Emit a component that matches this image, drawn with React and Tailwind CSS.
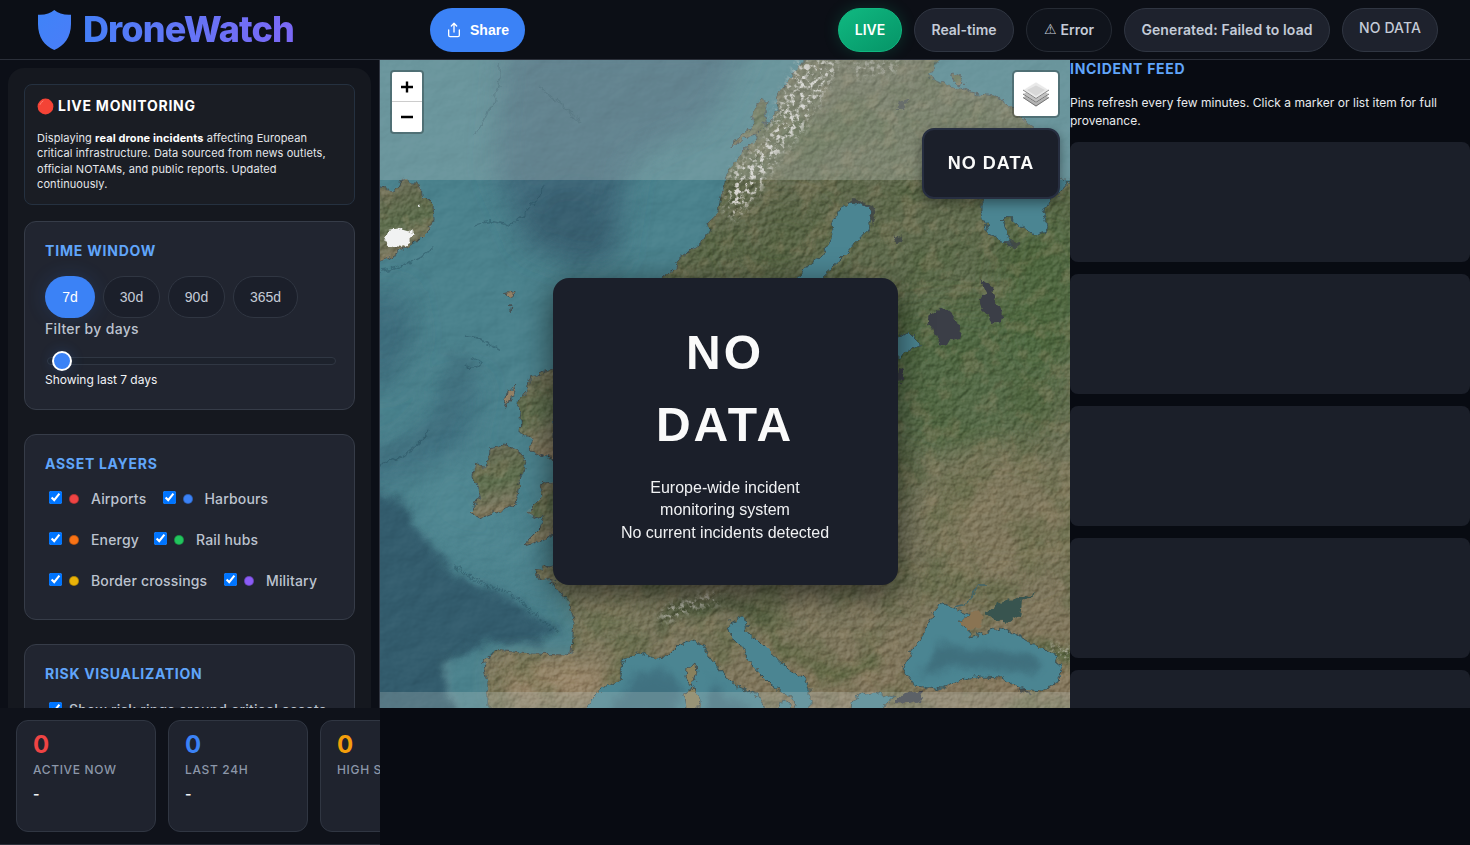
import React from 'react';
import { Share } from 'lucide-react';

const CARD = 'rounded-xl border border-[#363c48] bg-[#212530]';
const HEADING = 'text-[14px] leading-[22px] font-bold uppercase tracking-[0.7px] text-[#60a5fa]';

function Header() {
  return (
    <header className="flex h-[60px] w-full items-start border-b border-[#2b2f39] bg-[#0c0f16] pl-[30px] pr-8">
      <div className="flex w-[400px] shrink-0 items-start pt-[6px]">
        <svg width="48" height="48" viewBox="0 0 48 48" className="shrink-0">
          <defs>
            <linearGradient id="shield" x1="0" y1="0" x2="1" y2="1">
              <stop offset="0" stopColor="#3f83f8" />
              <stop offset="1" stopColor="#4a7df8" />
            </linearGradient>
          </defs>
          <path d="M24.300 4C28 7.500 34 9.200 41 8.800V18C41 31 34 40 24.300 44C14.500 40 8 31 8 18V8.800C15 9.200 20.500 7.500 24.300 4Z" fill="url(#shield)" />
        </svg>
        <span className="ml-[5px] bg-gradient-to-r from-[#447ff7] to-[#7b68f5] bg-clip-text text-[36px] leading-[46px] font-extrabold tracking-[-0.9px] whitespace-nowrap text-transparent">
          DroneWatch
        </span>
      </div>
      <button className="mt-2 flex h-11 w-[95px] shrink-0 items-center justify-center gap-2 rounded-[22px] bg-[#3b82f6] font-['Liberation_Sans',Arial,sans-serif] text-[14px] font-bold text-white">
        <Share size={16} strokeWidth={2} />
        Share
      </button>
      <div className="ml-auto flex gap-3 pt-2 text-[14px] font-semibold whitespace-nowrap text-[#c4cbd7]">
        <span className="flex h-11 w-16 items-center justify-center rounded-[22px] border border-[#10b981] bg-gradient-to-br from-[#10b981] to-[#069467] pb-px text-white shadow-[0_0_16px_rgba(16,185,129,0.2)]">LIVE</span>
        <span className="flex h-11 w-[100px] items-center justify-center rounded-[22px] border border-[#303642] bg-[#1e222d] pb-[2px]">Real-time</span>
        <span className="flex h-11 w-[86px] items-center justify-center gap-1 rounded-[22px] border border-[#262b34] bg-[#10141c] pb-[2px]">
          <span className="font-['DejaVu_Sans',sans-serif] font-bold">⚠</span>Error
        </span>
        <span className="flex h-11 w-[206px] items-center justify-center rounded-[22px] border border-[#303642] bg-[#1e222d] pb-[2px] tracking-[0.1px]">Generated: Failed to load</span>
        <span className="flex h-11 w-24 items-center justify-center rounded-[22px] border border-[#303642] bg-[#1e222d] pb-[6px] font-medium tracking-[0.1px]">NO DATA</span>
      </div>
    </header>
  );
}

function Check({ label, color, className = '' }) {
  return (
    <label className={`flex items-center ${className}`}>
      <input type="checkbox" defaultChecked className="mb-[3px] h-[13px] w-[13px]" />
      <span className="ml-[7px] h-[10px] w-[10px] rounded-full border border-black/25" style={{ backgroundColor: color }} />
      <span className="ml-3">{label}</span>
    </label>
  );
}

function Sidebar() {
  return (
    <aside className="h-[648px] w-[380px] shrink-0 overflow-hidden border-r border-[#303541] bg-[#0c0f17] p-2">
      <div className="flex h-[820px] w-[363px] flex-col rounded-2xl bg-[#15181f] p-4">
        <section className="h-[121px] shrink-0 rounded-lg border border-[#253140] bg-[#1a1d24] px-3 pt-[10px]">
          <h3 className="flex items-center text-[14px] leading-[22px] font-bold tracking-[0.75px] text-white">
            <svg width="17" height="17" viewBox="0 0 17 17" className="mr-1">
              <circle cx="8.500" cy="8.500" r="7.900" fill="#f44336" />
              <path d="M3 6.500A6.500 6.500 0 0 1 6 3" stroke="#ff7e70" strokeWidth="1" strokeLinecap="round" fill="none" />
            </svg>
            LIVE MONITORING
          </h3>
          <p className="mt-[14px] text-[11px] leading-[15.3px] tracking-[0.1px] whitespace-nowrap text-[#e5e7eb]">
            Displaying <b className="text-white">real drone incidents</b> affecting European<br />
            critical infrastructure. Data sourced from news outlets,<br />
            official NOTAMs, and public reports. Updated<br />
            continuously.
          </p>
        </section>

        <section className={`${CARD} mt-4 h-[189px] shrink-0 px-5 pt-[18px]`}>
          <h3 className={`${HEADING} tracking-[0.8px]`}>Time window</h3>
          <div className="mt-[14px] flex gap-2 font-['Liberation_Sans',Arial,sans-serif] text-[14px] text-[#c4cbd7]">
            <button className="h-[42px] w-[50px] rounded-[21px] bg-[#3b82f6] text-white shadow-[0_0_20px_rgba(59,130,246,0.16)]">7d</button>
            <button className="h-[42px] w-[57px] rounded-[21px] border border-[#303642] bg-[#1b1f2a]">30d</button>
            <button className="h-[42px] w-[57px] rounded-[21px] border border-[#303642] bg-[#1b1f2a]">90d</button>
            <button className="h-[42px] w-[65px] rounded-[21px] border border-[#303642] bg-[#1b1f2a]">365d</button>
          </div>
          <div className="text-[14px] leading-[22px] font-medium tracking-[0.3px] text-[#bcc3cf]">Filter by days</div>
          <div className="mt-[11px] ml-[2px] flex h-5 w-[289px] items-center">
            <div className="flex h-2 w-full items-center rounded-full border border-[#303743] bg-[#1d222c] pl-1">
              <div className="h-5 w-5 shrink-0 rounded-full border-2 border-white bg-[#3b82f6] shadow-[0_0_14px_rgba(59,130,246,0.2)]" />
            </div>
          </div>
          <div className="text-[12px] leading-[18px] tracking-[-0.03px] text-[#f1f3f6]">Showing last 7 days</div>
        </section>

        <section className={`${CARD} mt-6 h-[186px] shrink-0 pt-[18px] pl-5`}>
          <h3 className={HEADING}>Asset layers</h3>
          <div className="mt-[13px] flex flex-col gap-[19px] pl-1 text-[14px] leading-[22px] font-medium tracking-[0.16px] whitespace-nowrap text-[#bcc3cf]">
            <div className="flex"><Check className="w-[113px]" label="Airports" color="#ef4444" /><Check className="pl-[0.5px]" label="Harbours" color="#3b82f6" /></div>
            <div className="flex"><Check className="w-[105px]" label="Energy" color="#f97316" /><Check label="Rail hubs" color="#22c55e" /></div>
            <div className="flex"><Check className="w-[175px]" label="Border crossings" color="#eab308" /><Check label="Military" color="#8b5cf6" /></div>
          </div>
        </section>

        <section className={`${CARD} mt-6 h-[150px] shrink-0 pt-[18px] pl-5`}>
          <h3 className={HEADING}>Risk visualization</h3>
          <label className="mt-[14px] flex items-center pl-1 text-[14px] leading-[22px] font-medium tracking-[0.2px] whitespace-nowrap text-[#bcc3cf]">
            <input type="checkbox" defaultChecked className="mb-[3px] h-[13px] w-[13px]" />
            <span className="ml-[7px]">Show risk rings around critical assets</span>
          </label>
        </section>
      </div>
    </aside>
  );
}

function Terrain() {
  return (
    <svg width="690" height="648" viewBox="0 0 690 648" className="block">
      <defs>
        <linearGradient id="land" x1="0.35" y1="0" x2="0.55" y2="1">
          <stop offset="0" stopColor="#6b6c57" />
          <stop offset="0.3" stopColor="#5f694c" />
          <stop offset="0.5" stopColor="#5c6c4c" />
          <stop offset="0.75" stopColor="#72735a" />
          <stop offset="1" stopColor="#84775d" />
        </linearGradient>
        <filter id="soft" x="-30%" y="-30%" width="160%" height="160%"><feGaussianBlur stdDeviation="14" /></filter>
        <filter id="mist" x="-20%" y="-20%" width="140%" height="140%" colorInterpolationFilters="sRGB">
          <feGaussianBlur stdDeviation="4" result="b" />
          <feTurbulence type="fractalNoise" baseFrequency="0.025" numOctaves="4" seed="8" result="n" />
          <feDisplacementMap in="b" in2="n" scale="26" xChannelSelector="R" yChannelSelector="G" />
        </filter>
        <filter id="coast" x="-5%" y="-5%" width="110%" height="110%" colorInterpolationFilters="sRGB">
          <feTurbulence type="fractalNoise" baseFrequency="0.13" numOctaves="3" seed="4" result="n" />
          <feDisplacementMap in="SourceGraphic" in2="n" scale="9" xChannelSelector="R" yChannelSelector="G" />
        </filter>
        <filter id="snow" x="-10%" y="-10%" width="120%" height="120%" colorInterpolationFilters="sRGB">
          <feTurbulence type="fractalNoise" baseFrequency="0.2" numOctaves="5" seed="19" result="n" />
          <feColorMatrix in="n" type="matrix" values="0 0 0 0 0.86  0 0 0 0 0.85  0 0 0 0 0.83  5 0 0 0 -2.45" result="s" />
          <feGaussianBlur in="SourceAlpha" stdDeviation="5" result="a" />
          <feComposite in="s" in2="a" operator="in" />
        </filter>
        <filter id="relief" x="0" y="0" width="100%" height="100%" colorInterpolationFilters="sRGB">
          <feTurbulence type="fractalNoise" baseFrequency="0.16" numOctaves="4" seed="12" result="n" />
          <feDiffuseLighting in="n" surfaceScale="2" diffuseConstant="0.78" lightingColor="#ffffff" result="l">
            <feDistantLight azimuth="225" elevation="42" />
          </feDiffuseLighting>
          <feComposite in="l" in2="SourceAlpha" operator="in" />
        </filter>
        <filter id="swell" x="0" y="0" width="100%" height="100%" colorInterpolationFilters="sRGB">
          <feTurbulence type="fractalNoise" baseFrequency="0.03 0.04" numOctaves="4" seed="5" result="n" />
          <feDiffuseLighting in="n" surfaceScale="2.500" diffuseConstant="0.74" lightingColor="#ffffff">
            <feDistantLight azimuth="225" elevation="42" />
          </feDiffuseLighting>
        </filter>
        <filter id="tint" x="0" y="0" width="100%" height="100%" colorInterpolationFilters="sRGB">
          <feTurbulence type="fractalNoise" baseFrequency="0.022" numOctaves="6" seed="31" result="n" />
          <feColorMatrix in="n" type="matrix" values="0 0 0 0 0.26  0 0 0 0 0.35  0 0 0 0 0.19  0 3.500 0 0 -1.5" result="s" />
          <feComposite in="s" in2="SourceAlpha" operator="in" />
        </filter>
        <filter id="soil" x="0" y="0" width="100%" height="100%" colorInterpolationFilters="sRGB">
          <feTurbulence type="fractalNoise" baseFrequency="0.05" numOctaves="6" seed="77" result="n" />
          <feColorMatrix in="n" type="matrix" values="0 0 0 0 0.61  0 0 0 0 0.54  0 0 0 0 0.42  0 5 0 0 -2.5" result="s" />
          <feComposite in="s" in2="SourceAlpha" operator="in" />
        </filter>
        <clipPath id="view"><rect width="690" height="648" /></clipPath>
        <path id="mainland" d="M283 217L296 209 297 201 308 192 322 182 330 170 328 163 338 152 341 135 345 122 349 108 358 100 367 87 376 78 380 68 391 62 398 50 395 38 403 27 412 18 418 8 428 -5H562L554 8 548 15 556 20 570 27 585 30 600 34 615 36 630 46 645 60 652 68 662 90 660 130 605 139 602 150 608 172 620 180 632 187 628 175 623 160 627 156 640 166 655 174 667 170 663 155 670 142 690 120 700 115V660H108L108 620 103 600 115 590 150 594 188 595 192 592 194 560 190 546 182 534 175 524 157 516 155 510 172 506 200 500V440H230V300H250Z" />
        <g id="isles">
          <path d="M352 88L354 80 366 71 374 66 372 55 380 38 390 42 384 55 386 66 376 76 364 78Z" />
          <path d="M-4 128L13 131 20 126 22 119 31 124 40 124 41 134 53 146 54 160 48 172 38 182 25 188 12 196 -4 204Z" />
          <path d="M147 330L150 317 175 310V400L160 395 150 390 153 380 140 372 142 352 136 343Z" />
          <path d="M172 422L160 424 163 435 146 452 155 458 165 455 160 468 150 478 144 485 155 482 168 477 178 470V422Z" />
          <path d="M110 389L125 385 138 390 146 402 140 418 138 430 136 444 125 448 100 458 90 452 100 438 97 425 92 415 95 405 108 406Z" />
        </g>
      </defs>
      <g clipPath="url(#view)">
        <rect width="690" height="648" fill="#4b828d" />
        <g filter="url(#soft)">
          <path d="M125 -20H370L330 60 250 100 235 200 150 190 115 110Z" fill="#41697a" />
          <path d="M165 130L215 125 240 200 190 205 140 175Z" fill="#395f70" />
          <path d="M-20 235L25 230 35 280 10 330 -20 320Z" fill="#3c6c7c" />
          <path d="M60 325L100 320 85 385 40 410 -20 430V400L30 380 60 350Z" fill="#3f6f80" />
          <path d="M60 400H100L150 500 185 540 120 500 60 490 20 450Z" fill="#528994" opacity=".7" />
        </g>
        <g filter="url(#mist)">
          <path d="M-20 425L30 447 50 490 75 515 115 530 150 550 182 577 155 583 100 580 78 596 70 608 75 670H-20Z" fill="#335c6d" />
          <path d="M65 292L92 290 90 330 70 370 40 390 -10 410V395L35 380 60 345Z" fill="#41717f" opacity=".7" />
          <path d="M62 600L78 605 72 625 82 648H68Z" fill="#5f8d98" opacity=".6" />
        </g>
        <g fill="none" stroke="#28505f" strokeWidth="1.500" opacity=".45" filter="url(#coast)">
          <path d="M95 165Q112 158 128 166Q150 154 165 125" />
          <path d="M120 5Q122 32 106 55L96 75M160 27Q180 42 200 62M0 210Q35 207 54 186M85 276Q105 280 120 290M90 300Q98 293 100 305Q90 312 84 304" />
          <path d="M75 507L88 515 104 525 122 530 140 540 155 555 170 567 180 573" strokeWidth="4" strokeDasharray="1.500 2" />
          <path d="M0 405Q35 395 50 370" />
        </g>
        <rect width="690" height="648" opacity=".28" className="mix-blend-soft-light" filter="url(#swell)" />
        <g filter="url(#coast)" fill="url(#land)" stroke="#454f51" strokeWidth="1">
          <use href="#mainland" />
          <use href="#isles" />
          <path d="M124 350L128 333 136 324 133 334Z M124 234L136 231 132 238Z M131 243L130 253Z" fill="#938065" />
          <path d="M570 19L572 13 580 17 584 24 580 27Z" />
        </g>
        <g filter="url(#soft)">
          <path d="M120 605H240L215 640H125Z" fill="#a98f70" opacity=".75" />
          <ellipse cx="570" cy="320" rx="110" ry="75" fill="#48663c" opacity=".5" />
          <ellipse cx="625" cy="455" rx="85" ry="65" fill="#857c5d" opacity=".6" />
          <ellipse cx="665" cy="230" rx="45" ry="80" fill="#48683c" opacity=".55" />
          <ellipse cx="400" cy="180" rx="50" ry="40" fill="#586445" opacity=".6" />
          <ellipse cx="235" cy="545" rx="45" ry="28" fill="#8a8664" opacity=".35" />
        </g>
        <g opacity=".3"><use href="#mainland" filter="url(#tint)" /></g>
        <g opacity=".24"><use href="#mainland" filter="url(#soil)" /><use href="#isles" filter="url(#soil)" /></g>
        <path d="M275 560L290 545 325 533 350 530 390 545 385 560 345 550 310 553 285 580Z" fill="#3f5031" opacity=".5" filter="url(#mist)" />
        <path d="M375 565L405 585 430 600 460 605 505 600 495 615 440 615 405 602Z" fill="#4b5e35" opacity=".5" filter="url(#mist)" />
        <path d="M640 570L690 590V612L672 594Z" fill="#3f5a30" opacity=".7" filter="url(#mist)" />
        <g filter="url(#snow)">
          <path d="M420 0H460L440 40 422 70 400 95 380 130 355 160 345 150 352 110 385 80 400 40Z" fill="#fff" />
          <path d="M470 0H530L510 15 475 18Z" fill="#fff" opacity=".5" />
          <path d="M278 558L290 545 325 536 345 532 340 542 310 550 285 562Z" fill="#fff" opacity=".8" />
          <path d="M665 583L690 590V601L680 597Z" fill="#fff" />
        </g>
        <g opacity=".5" className="mix-blend-soft-light"><use href="#mainland" filter="url(#relief)" /><use href="#isles" filter="url(#relief)" /></g>
        <g filter="url(#coast)">
          <path d="M3 178L8 170 20 168 34 172 30 182 20 188 8 186Z" fill="#f1f2f2" />
          <path d="M38 146L41 142 42 148Z" fill="#f1f2f2" />
          <g fill="#4b8592" stroke="#3c5357" strokeWidth="1">
            <path d="M412 225L420 215 428 205 445 193 453 170 450 163 460 150 468 143 488 145 492 157 487 170 478 180 468 192 460 200 446 212 445 225Z" />
            <path d="M602 134L660 125 690 120 670 142 663 155 667 170 655 174 640 166 627 156 623 160 628 175 632 187 620 180 608 172 602 150Z" />
            <path d="M500 275L518 277 530 273 541 284 530 290 518 298 500 300Z" />
            <path d="M347 565L360 558 365 560 367 572 378 580 390 592 405 606 425 618 430 628 430 655H420L410 636 390 624 378 612 366 598 360 585 350 575Z" />
            <path d="M205 655L213 636 222 628 240 620 243 608 245 598 258 592 275 599 290 594 300 584 312 580 322 585 330 598 345 616 360 628 376 634 388 655H319L319 640 315 628 303 634 306 655Z M395 655L402 640 410 645 417 655Z M465 655L478 636 495 632 515 636 505 645 500 655Z" />
            <path d="M560 543L572 548 588 556 578 562 590 572 590 578 600 575 610 571 625 568 633 573 650 582 672 594 682 610 678 622 662 631 640 629 620 617 600 616 580 620 562 629 535 625 527 615 523 608 530 592 543 575 550 558Z" />
          </g>
          <path d="M548 258L560 248 570 252 582 270 580 278 568 283 560 286 553 268Z M600 218L612 228 615 240 622 252 620 262 612 264 604 250 600 240 608 235Z M515 642L525 633 540 632 543 638 530 643Z M518 308L524 310 522 322 517 320Z" fill="#3b3e47" />
          <path d="M605 551L620 543 640 537 655 532 642 542 640 556 630 562 615 560 605 555Z" fill="#38544f" />
          <path d="M578 562L588 556 596 548 604 556 600 568 588 570Z" fill="#8a7453" />
          <path d="M465 142L475 139 492 145 496 155 493 166 490 150 480 144Z M630 187L622 182 631 178 640 183 636 190Z M512 177L520 175 524 182 516 183Z M520 42L530 38 524 48 516 48Z M650 637L638 630 645 628Z" fill="#3e4547" opacity=".8" />
          <path d="M572 547L584 545 592 537 598 526 608 526" stroke="#43666b" strokeWidth="1.500" fill="none" />
        </g>
        <path d="M540 605L560 582 590 588 620 586 650 594 665 608 655 618 620 608 590 610 555 615 540 614Z" fill="#3d6b79" opacity=".8" filter="url(#mist)" />
        <path d="M252 620L280 608 298 625 292 660H222Z M330 612L350 632 375 660H328Z" fill="#3d6b7b" opacity=".75" filter="url(#mist)" />
        <g filter="url(#coast)" fill="#89815d" stroke="#454f51" strokeWidth="1">
          <path d="M307 609L315 602 316 615 312 626 306 618Z M303 634L315 628 319 640 315 655H306Z" />
        </g>
        <rect width="690" height="120" fill="#c9cfcb" opacity=".26" />
        <rect y="632" width="690" height="16" fill="#c9cfcb" opacity=".24" />
      </g>
    </svg>
  );
}

function MapView() {
  return (
    <main className="relative h-[648px] w-[690px] shrink-0 overflow-hidden font-['Liberation_Sans',Arial,sans-serif]">
      <Terrain />
      <div className="absolute top-[10px] left-[10px] flex flex-col overflow-hidden rounded border-2 border-black/25 bg-clip-padding">
        <button className="flex h-[30px] w-[30px] items-center justify-center border-b border-[#cccccc] bg-white">
          <svg width="12" height="12" viewBox="0 0 12 12"><path d="M6 0.500V11.500M0 6H12" stroke="#000" strokeWidth="2.400" /></svg>
        </button>
        <button className="flex h-[30px] w-[30px] items-center justify-center bg-white">
          <svg width="12" height="4" viewBox="0 0 12 4"><path d="M0 2H12" stroke="#000" strokeWidth="2.400" /></svg>
        </button>
      </div>
      <button className="absolute top-[10px] right-[10px] flex h-12 w-12 items-center justify-center rounded-[5px] border-2 border-black/25 bg-white bg-clip-padding">
        <svg width="26" height="26" viewBox="0 0 26 26">
          <path d="M0 16.500L13 8.500 26 16.500 13 25.500Z" fill="#b3b3b3" />
          <path d="M0 16.500L13 25 26 16.500" stroke="#747474" strokeWidth="1" fill="none" />
          <path d="M0 13L13 5 26 13 13 21.500Z" fill="#c2c2c2" stroke="#fff" strokeWidth=".6" />
          <path d="M0 13L13 21.300 26 13" stroke="#747474" strokeWidth="1" fill="none" />
          <path d="M0 9L13 1 26 9 13 17.500Z" fill="#e9e9e9" stroke="#fff" strokeWidth=".6" />
          <path d="M4 9L13 4.500 22 9 13 15Z" fill="#d7d7d7" />
          <path d="M0 9L13 17.500 26 9" stroke="#858585" strokeWidth="1" fill="none" />
        </svg>
      </button>
      <div className="absolute top-[68px] right-[10px] flex h-[71px] w-[138px] items-center justify-center rounded-xl border-2 border-[#272e40] bg-[#1b1f2a] text-[18px] font-bold tracking-[1px] text-[#fafafa] shadow-[0_4px_12px_rgba(0,0,0,0.4)]">
        NO DATA
      </div>
      <div className="absolute top-[217.5px] left-[172.5px] flex h-[307px] w-[345px] flex-col items-center rounded-2xl bg-[#1b1f2a] pt-[39.5px] text-center text-[#fafafa] shadow-[0_8px_32px_rgba(0,0,0,0.6)]">
        <div className="text-[48px] leading-[72px] font-bold tracking-[3px]">NO<br />DATA</div>
        <div className="mt-[16px] text-[16px] leading-[22.4px] text-[#f0f1f3]">Europe-wide incident<br />monitoring system<br />No current incidents detected</div>
      </div>
    </main>
  );
}

function Feed() {
  return (
    <aside className="flex h-[648px] w-[400px] shrink-0 flex-col overflow-hidden bg-[#080b12]">
      <h3 className="h-[34px] shrink-0 text-[14px] leading-[18px] font-bold tracking-[0.7px] text-[#60a5fa]">INCIDENT FEED</h3>
      <p className="h-12 shrink-0 text-[12px] leading-[18px] tracking-[0.025px] text-[#e9ebee]">Pins refresh every few minutes. Click a marker or list item for full provenance.</p>
      <div className="flex flex-col gap-3">
        {[0, 1, 2, 3, 4].map((i) => <div key={i} className="h-[120px] shrink-0 rounded-lg bg-[#1b1f29]" />)}
      </div>
    </aside>
  );
}

const STATS = [
  ['0', 'ACTIVE NOW', '-', '#ef4444'],
  ['0', 'LAST 24H', '-', '#3b82f6'],
  ['0', 'HIGH SEVERITY', '', '#f59e0b'],
];

function Stats() {
  return (
    <footer className="flex h-[137px] w-[380px] gap-3 overflow-hidden border-b border-[#2b2f39] bg-[#0f121a] pt-3 pl-4">
      {STATS.map(([n, label, note, color]) => (
        <div key={label} className="h-28 w-[140px] shrink-0 rounded-xl border border-[#303642] bg-[#1f232e] px-4 pt-[9px]">
          <div className="text-[24px] leading-[30px] font-bold" style={{ color }}>{n}</div>
          <div className="mt-[1px] text-[12px] leading-[18px] font-medium tracking-[0.65px] whitespace-nowrap text-[#8c97a9]">{label}</div>
          <div className="mt-[5px] text-[14px] leading-[20px] font-semibold text-[#f1f3f6]">{note}</div>
        </div>
      ))}
    </footer>
  );
}

export default function App() {
  return (
    <div className="flex h-[845px] w-[1470px] flex-col overflow-hidden bg-[#080b12] font-[Inter,'Noto_Sans',sans-serif]">
      <Header />
      <div className="flex h-[648px] shrink-0"><Sidebar /><MapView /><Feed /></div>
      <Stats />
    </div>
  );
}
